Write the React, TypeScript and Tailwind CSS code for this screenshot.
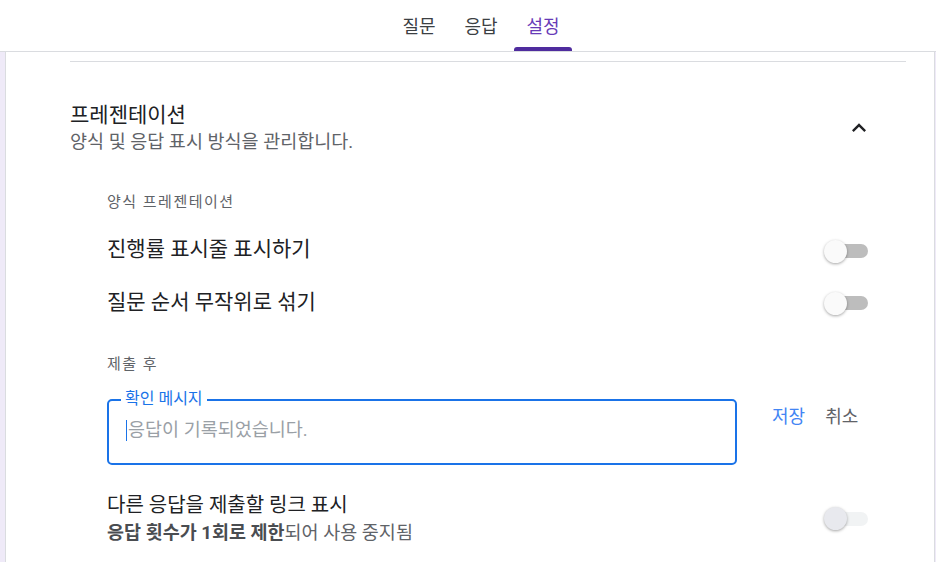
import React from "react";

const FONT = 'Roboto, "Noto Sans CJK KR", "Noto Sans", sans-serif';

function Toggle({ disabled = false }: { disabled?: boolean }) {
  return (
    <div className="relative w-[44px] h-[22px] flex items-center">
      <div
        className={
          "absolute right-0 w-[36px] h-[14px] rounded-full " +
          (disabled ? "bg-[#f1f3f4]" : "bg-[#bdbdbd]")
        }
      />
      <div
        className={
          "absolute left-0 w-[23px] h-[23px] rounded-full shadow-[0_1px_3px_rgba(0,0,0,0.35)] " +
          (disabled ? "bg-[#e8e9ee]" : "bg-[#fafafa]")
        }
      />
    </div>
  );
}

export default function App() {
  return (
    <div
      className="w-[936px] h-[562px] overflow-hidden bg-white"
      style={{ fontFamily: FONT }}
    >
      {/* Header tabs */}
      <header className="h-[52px] border-b border-[#dadce0] flex justify-center pl-[26px]">
        <div className="w-[62px] flex flex-col items-center">
          <span className="mt-[14px] text-[18px] leading-[26px] text-[#3c4043]">질문</span>
        </div>
        <div className="w-[62px] flex flex-col items-center">
          <span className="mt-[14px] text-[18px] leading-[26px] text-[#3c4043]">응답</span>
        </div>
        <div className="w-[62px] flex flex-col items-center">
          <span className="mt-[14px] text-[18px] leading-[26px] text-[#673ab7]">설정</span>
          <div className="mt-auto w-[58px] h-[4px] rounded-t-[3px] bg-[#4f2c9e]" />
        </div>
      </header>

      <div className="flex h-[510px]">
        <div className="w-[5px] bg-[#efeaf8]" />
        <div className="w-[930px] border-l border-r border-[#dadce0] bg-white pl-[64px] pr-[28px]">
          <div className="mt-[9px] h-[1px] bg-[#dadce0]" />

          {/* Section header */}
          <div className="mt-[39px] flex items-start">
            <div className="flex-1">
              <div className="text-[21px] leading-[28px] text-[#202124]">프레젠테이션</div>
              <div className="mt-[1px] text-[18.5px] leading-[24px] text-[#5f6368]">
                양식 및 응답 표시 방식을 관리합니다.
              </div>
            </div>
            <div className="w-[40px] h-[40px] mt-[7px] mr-[27px] flex items-center justify-center">
              <svg width="28" height="28" viewBox="0 0 24 24">
                <path d="M7.41 15.41L12 10.83l4.59 4.58L18 14l-6-6-6 6z" fill="#202124" />
              </svg>
            </div>
          </div>

          {/* Inner content */}
          <div className="pl-[37px] pr-[38px]">
            <div className="mt-[38px] text-[15px] leading-[20px] tracking-[1.5px] text-[#5f6368]">
              양식 프레젠테이션
            </div>

            <div className="mt-[23px] h-[32px] flex items-center justify-between">
              <span className="pb-[4px] text-[21px] leading-[28px] text-[#202124]">진행률 표시줄 표시하기</span>
              <Toggle />
            </div>
            <div className="mt-[20px] h-[32px] flex items-center justify-between">
              <span className="pb-[2px] text-[21px] leading-[28px] text-[#202124]">질문 순서 무작위로 섞기</span>
              <Toggle />
            </div>

            <div className="mt-[35px] text-[15px] leading-[20px] tracking-[1.5px] text-[#5f6368]">
              제출 후
            </div>

            <div className="mt-[25px] flex items-start">
              <div className="relative w-[630px] h-[66px] rounded-[5px] border-2 border-[#1a73e8]">
                <span className="absolute -top-[12px] left-[12px] px-[4px] bg-white text-[16px] leading-[20px] text-[#1a73e8]">
                  확인 메시지
                </span>
                <div className="flex items-center mt-[17px] ml-[17px]">
                  <span className="w-[1px] h-[21px] bg-[#1a73e8]" />
                  <span className="ml-[1px] text-[18.5px] leading-[24px] text-[#9aa0a6]">
                    응답이 기록되었습니다.
                  </span>
                </div>
              </div>
              <div className="ml-[35px] mt-[6px] flex gap-[20px] text-[18px] leading-[24px]">
                <span className="text-[#4285f4]">저장</span>
                <span className="text-[#5f6368]">취소</span>
              </div>
            </div>

            <div className="mt-[27px] flex items-center justify-between">
              <div>
                <div className="text-[20px] leading-[26px] text-[#202124]">다른 응답을 제출할 링크 표시</div>
                <div className="mt-[3px] text-[18.5px] leading-[24px] text-[#5f6368]">
                  <span className="font-bold text-[#4a4d51]">응답 횟수가 1회로 제한</span>되어 사용 중지됨
                </div>
              </div>
              <Toggle disabled />
            </div>
          </div>
        </div>
        <div className="w-[1px] bg-[#efeaf8]" />
      </div>
    </div>
  );
}
